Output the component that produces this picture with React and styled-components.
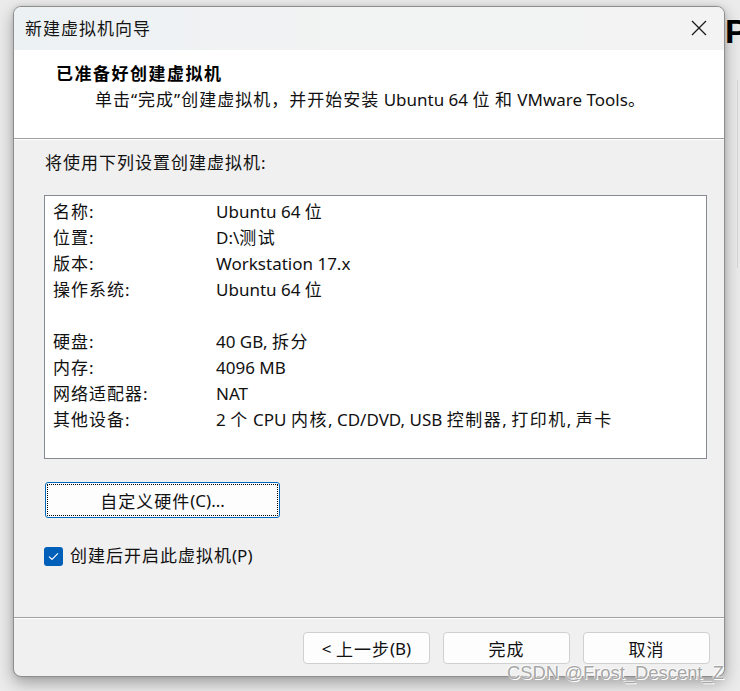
import React from "react";
import styled, { createGlobalStyle } from "styled-components";

const GlobalStyle = createGlobalStyle`
  html, body {
    margin: 0;
    padding: 0;
    background: #ebebeb;
  }
  body {
    font-family: "Noto Sans", "Noto Sans CJK SC", sans-serif;
    color: #111;
  }
  * { box-sizing: border-box; }
`;

const Page = styled.div`
  display: flex;
  align-items: flex-start;
  width: 740px;
  height: 691px;
  padding: 6px 0 0 13px;
  overflow: hidden;
  position: relative;
`;

const Window = styled.div`
  width: 712px;
  height: 671px;
  display: flex;
  flex-direction: column;
  border: 1px solid #8e8e8e;
  border-radius: 8px;
  overflow: hidden;
  background: #f0f0f0;
  box-shadow: 0 6px 16px rgba(0, 0, 0, 0.32), 0 0 4px rgba(0, 0, 0, 0.12);
`;

const TitleBar = styled.div`
  height: 43px;
  flex: none;
  display: flex;
  align-items: center;
  justify-content: space-between;
  padding: 0 16px 2px 11px;
  background: linear-gradient(90deg, #ecf1f4 0%, #f2f3f3 45%, #f3f3f3 100%);
`;

const TitleText = styled.span`
  font-family: "Noto Sans CJK SC", sans-serif;
  font-size: 17px;
  letter-spacing: 1px;
  line-height: 24px;
  color: #141414;
`;

const CloseButton = styled.div`
  width: 18px;
  height: 18px;
  display: flex;
  align-items: center;
  justify-content: center;
`;

const Header = styled.div`
  height: 89px;
  flex: none;
  background: #ffffff;
  padding: 11px 0 0 42px;
  border-bottom: 1px solid #a0a0a0;
`;

const HeaderTitle = styled.div`
  font-family: "Noto Sans CJK SC", sans-serif;
  font-weight: 700;
  font-size: 17px;
  letter-spacing: 1.5px;
  line-height: 24px;
  color: #000;
`;

const HeaderSub = styled.div`
  font-size: 17px;
  line-height: 29px;
  margin-left: 39px;
  color: #111;
  white-space: nowrap;
`;

const Cjk = styled.span`
  letter-spacing: ${(p) => p.$spacing ?? 1}px;
`;

const Body = styled.div`
  flex: 1;
  display: flex;
  flex-direction: column;
  align-items: flex-start;
  padding: 11px 17px 0 30px;
  border-top: 1px solid #ffffff;
  border-bottom: 1px solid #a0a0a0;
`;

const SectionLabel = styled.div`
  font-size: 17px;
  line-height: 24px;
  margin-left: 1px;
`;

const SummaryBox = styled.div`
  width: 663px;
  height: 264px;
  margin-top: 20px;
  background: #ffffff;
  border: 1px solid #868b93;
  padding: 3px 8px;
`;

const Row = styled.div`
  display: grid;
  grid-template-columns: 163px 1fr;
  height: 26px;
  align-items: center;
  font-size: 17px;
  line-height: 26px;
  white-space: nowrap;
`;

const DialogButton = styled.button`
  font-family: "Noto Sans", "Noto Sans CJK SC", sans-serif;
  font-size: 17px;
  color: #111;
  background: #fdfdfd;
  border: 1px solid ${(p) => (p.$focused ? "#0067c0" : "#d0d0d0")};
  border-radius: ${(p) => (p.$focused ? "3px" : "4px")};
  padding: 0;
  display: flex;
  align-items: center;
  justify-content: center;
  position: relative;
  width: ${(p) => p.$width}px;
  height: ${(p) => p.$height}px;
  white-space: pre;
  cursor: default;

  ${(p) =>
    p.$focused &&
    `
    &::after {
      content: "";
      position: absolute;
      inset: 1px;
      border: 1px dotted #000;
      border-radius: 1px;
    }
  `}
`;

const CustomizeButton = styled(DialogButton)`
  margin-top: 23px;
  margin-left: 1px;
`;

const CheckRow = styled.label`
  display: flex;
  align-items: center;
  gap: 7px;
  margin-top: 27px;
  font-size: 17px;
  line-height: 22px;
`;

const CheckBox = styled.span`
  width: 19px;
  height: 19px;
  border-radius: 3px;
  background: #005fb8;
  display: flex;
  align-items: center;
  justify-content: center;
`;

const Footer = styled.div`
  height: 58px;
  flex: none;
  display: flex;
  justify-content: flex-end;
  align-items: flex-start;
  gap: 13px;
  padding: 13px 14px 0 0;
  border-top: 1px solid #ffffff;
`;

const Backdrop = styled.div`
  width: 15px;
  height: 100%;
  display: flex;
  flex-direction: column;
  flex: none;
`;

const BackGlyph = styled.div`
  font-family: "Liberation Sans", sans-serif;
  font-weight: 700;
  font-size: 34px;
  line-height: 34px;
  margin-top: 8px;
  color: #000;
`;

const BackEdge = styled.div`
  height: 188px;
  margin-top: 32px;
  margin-left: 12px;
  border-left: 1px solid #d2d2d2;
`;

const Watermark = styled.div`
  position: absolute;
  left: 507px;
  top: 661px;
  font-family: "Liberation Sans", sans-serif;
  font-size: 18.4px;
  line-height: 24px;
  color: #a6a6a6;
  text-shadow: 0 0 1px #fff, 1px 1px 0 #fff, -1px -1px 0 rgba(255, 255, 255, 0.6);
  white-space: nowrap;
`;

// wrap runs of CJK characters so they get the wider advance of the original dialog font
const CJK_RUN = /([\u3000-\u303f\u4e00-\u9fff\uff00-\uffef“”]+)/;

function Spaced({ text, spacing }) {
  return text.split(CJK_RUN).map((part, i) =>
    CJK_RUN.test(part) ? (
      <Cjk key={i} $spacing={spacing}>
        {part}
      </Cjk>
    ) : (
      part
    )
  );
}

const rows = [
  ["名称:", "Ubuntu 64 位"],
  ["位置:", "D:\\测试"],
  ["版本:", "Workstation 17.x"],
  ["操作系统:", "Ubuntu 64 位"],
  ["", ""],
  ["硬盘:", "40 GB, 拆分"],
  ["内存:", "4096 MB"],
  ["网络适配器:", "NAT"],
  ["其他设备:", "2 个 CPU 内核, CD/DVD, USB 控制器, 打印机, 声卡"],
];

export default function App() {
  return (
    <>
      <GlobalStyle />
      <Page>
        <Window>
          <TitleBar>
            <TitleText>新建虚拟机向导</TitleText>
            <CloseButton>
              <svg width="16" height="16" viewBox="0 0 16 16">
                <path d="M1 1 L15 15 M15 1 L1 15" stroke="#1a1a1a" strokeWidth="1.3" fill="none" />
              </svg>
            </CloseButton>
          </TitleBar>

          <Header>
            <HeaderTitle>已准备好创建虚拟机</HeaderTitle>
            <HeaderSub>
              <Spaced text="单击“完成”创建虚拟机，并开始安装 Ubuntu 64 位 和 VMware Tools。" />
            </HeaderSub>
          </Header>

          <Body>
            <SectionLabel>
              <Spaced text="将使用下列设置创建虚拟机:" />
            </SectionLabel>
            <SummaryBox>
              {rows.map(([label, value], i) => (
                <Row key={i}>
                  <span>
                    <Spaced text={label} />
                  </span>
                  <span>
                    <Spaced text={value} spacing={1.5} />
                  </span>
                </Row>
              ))}
            </SummaryBox>
            <CustomizeButton $focused $width={235} $height={36}>
              <Spaced text="自定义硬件(C)..." />
            </CustomizeButton>
            <CheckRow>
              <CheckBox>
                <svg width="11" height="9" viewBox="0 0 11 9">
                  <path d="M1 4.6 L4 7.4 L10 1.4" stroke="#fff" strokeWidth="1.2" fill="none" />
                </svg>
              </CheckBox>
              <span>
                <Spaced text="创建后开启此虚拟机(P)" />
              </span>
            </CheckRow>
          </Body>

          <Footer>
            <DialogButton $width={127} $height={32}>
              <Spaced text="< 上一步(B)" />
            </DialogButton>
            <DialogButton $width={127} $height={32}>
              <Spaced text="完成" />
            </DialogButton>
            <DialogButton $width={127} $height={32}>
              <Spaced text="取消" />
            </DialogButton>
          </Footer>
        </Window>

        <Backdrop>
          <BackGlyph>P</BackGlyph>
          <BackEdge />
        </Backdrop>

        <Watermark>CSDN @Frost_Descent_Z</Watermark>
      </Page>
    </>
  );
}
